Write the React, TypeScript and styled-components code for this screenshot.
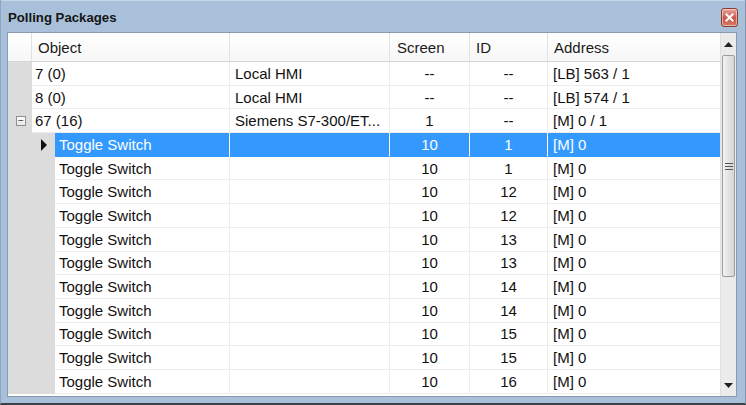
import React from "react";
import styled, { createGlobalStyle } from "styled-components";

const GlobalStyle = createGlobalStyle`
  html, body {
    margin: 0;
    padding: 0;
    background: #a9c0da;
  }
  * {
    box-sizing: border-box;
  }
`;

type RowData = {
  object: string;
  target: string;
  screen: string;
  id: string;
  address: string;
  child?: boolean;
  expand?: boolean;
  selected?: boolean;
};

const rows: RowData[] = [
  { object: "7 (0)", target: "Local HMI", screen: "--", id: "--", address: "[LB] 563 / 1" },
  { object: "8 (0)", target: "Local HMI", screen: "--", id: "--", address: "[LB] 574 / 1" },
  { object: "67 (16)", target: "Siemens S7-300/ET...", screen: "1", id: "--", address: "[M] 0 / 1", expand: true },
  { object: "Toggle Switch", target: "", screen: "10", id: "1", address: "[M] 0", child: true, selected: true },
  { object: "Toggle Switch", target: "", screen: "10", id: "1", address: "[M] 0", child: true },
  { object: "Toggle Switch", target: "", screen: "10", id: "12", address: "[M] 0", child: true },
  { object: "Toggle Switch", target: "", screen: "10", id: "12", address: "[M] 0", child: true },
  { object: "Toggle Switch", target: "", screen: "10", id: "13", address: "[M] 0", child: true },
  { object: "Toggle Switch", target: "", screen: "10", id: "13", address: "[M] 0", child: true },
  { object: "Toggle Switch", target: "", screen: "10", id: "14", address: "[M] 0", child: true },
  { object: "Toggle Switch", target: "", screen: "10", id: "14", address: "[M] 0", child: true },
  { object: "Toggle Switch", target: "", screen: "10", id: "15", address: "[M] 0", child: true },
  { object: "Toggle Switch", target: "", screen: "10", id: "15", address: "[M] 0", child: true },
  { object: "Toggle Switch", target: "", screen: "10", id: "16", address: "[M] 0", child: true },
];

function App() {
  return (
    <>
      <GlobalStyle />
      <StWindow>
        <StTitleBar>
          <StTitle>Polling Packages</StTitle>
          <StCloseButton>
            <svg width="9" height="9" viewBox="0 0 9 9">
              <path d="M1.5 1.5 L7.5 7.5 M7.5 1.5 L1.5 7.5" stroke="#fff" strokeWidth="2" strokeLinecap="square" />
            </svg>
          </StCloseButton>
        </StTitleBar>
        <StGridFrame>
          <StGrid>
            <StHeaderRow>
              <StHeaderCell />
              <StHeaderCell $pad={6}>Object</StHeaderCell>
              <StHeaderCell />
              <StHeaderCell $pad={7}>Screen</StHeaderCell>
              <StHeaderCell $pad={6}>ID</StHeaderCell>
              <StHeaderCell $pad={6} $last>Address</StHeaderCell>
            </StHeaderRow>
            {rows.map((row, i) => (
              <StRow key={i}>
                <StRowHeader>
                  {row.expand && <StExpandBox>−</StExpandBox>}
                </StRowHeader>
                <StObjectCell $selected={row.selected}>
                  {row.child && (
                    <StIndent>
                      {row.selected && <StArrow />}
                    </StIndent>
                  )}
                  <StCellText $selected={row.selected} $pad={row.child ? 4 : 3}>
                    {row.object}
                  </StCellText>
                </StObjectCell>
                <StCell $selected={row.selected} $pad={5}>{row.target}</StCell>
                <StCell $selected={row.selected} $align="center">{row.screen}</StCell>
                <StCell $selected={row.selected} $align="center">{row.id}</StCell>
                <StCell $selected={row.selected} $pad={5} $last>{row.address}</StCell>
              </StRow>
            ))}
          </StGrid>
          <StScrollBar>
            <StScrollArrow>
              <svg width="9" height="5" viewBox="0 0 9 5">
                <path d="M0 5 L4.5 0 L9 5 Z" fill="#222" />
              </svg>
            </StScrollArrow>
            <StThumb>
              <StGrip />
            </StThumb>
            <StTrack />
            <StScrollArrow>
              <svg width="9" height="5" viewBox="0 0 9 5">
                <path d="M0 0 L4.5 5 L9 0 Z" fill="#222" />
              </svg>
            </StScrollArrow>
          </StScrollBar>
        </StGridFrame>
      </StWindow>
    </>
  );
}

export default App;

const columns = "24px 198px 160px 80px 78px 172px";

const StWindow = styled.div`
  width: 746px;
  height: 405px;
  display: flex;
  flex-direction: column;
  background: #a9c0da;
  border-left: 1px solid #8ea7c4;
  border-right: 1px solid #7f93aa;
  border-bottom: 2px solid #3c4148;
  font-family: "Liberation Sans", Arial, sans-serif;
  color: #111;
`;

const StTitleBar = styled.div`
  height: 32px;
  display: flex;
  align-items: center;
  justify-content: space-between;
  padding: 0 7px 0 7px;
  border-top: 1px solid #c4d5e8;
`;

const StTitle = styled.span`
  font-size: 13.2px;
  font-weight: 700;
  color: #151515;
  margin-top: 1px;
`;

const StCloseButton = styled.div`
  width: 17px;
  height: 19px;
  margin-top: 2px;
  border: 1px solid #8c3b30;
  border-radius: 3px;
  background: linear-gradient(#e9a597, #c8574a 55%, #d77a6a);
  box-shadow: inset 0 0 0 1px rgba(255, 255, 255, 0.45);
  display: flex;
  align-items: center;
  justify-content: center;
`;

const StGridFrame = styled.div`
  flex: 1;
  display: flex;
  margin: 0 8px 6px 6px;
  background: #fff;
  border: 1px solid #8a9bb0;
  overflow: hidden;
`;

const StGrid = styled.div`
  width: 712px;
  display: flex;
  flex-direction: column;
  font-size: 15px;
`;

const StHeaderRow = styled.div`
  display: grid;
  grid-template-columns: ${columns};
  height: 29px;
  background: linear-gradient(#ffffff, #f7f7f7);
  border-bottom: 1px solid #d5d5d5;
`;

const StHeaderCell = styled.div<{ $pad?: number; $last?: boolean }>`
  display: flex;
  align-items: center;
  padding-left: ${(p) => p.$pad ?? 0}px;
  border-right: ${(p) => (p.$last ? "none" : "1px solid #e2e2e2")};
  color: #1a1a1a;
`;

const StRow = styled.div`
  display: grid;
  grid-template-columns: ${columns};
  height: 23.7px;
`;

const StRowHeader = styled.div`
  background: #dcdcdc;
  display: flex;
  align-items: center;
  justify-content: center;
`;

const StExpandBox = styled.div`
  width: 10px;
  height: 10px;
  margin-left: 2px;
  border: 1px solid #8e8f8f;
  background: linear-gradient(#ffffff, #e6e6e6);
  font-size: 10px;
  line-height: 7px;
  text-align: center;
  color: #333;
`;

const StObjectCell = styled.div<{ $selected?: boolean }>`
  display: flex;
  align-items: stretch;
  border-right: 1px solid ${(p) => (p.$selected ? "#ffffff" : "#ececec")};
  min-width: 0;
`;

const StIndent = styled.div`
  width: 23px;
  flex-shrink: 0;
  background: #dcdcdc;
  display: flex;
  align-items: center;
  padding-left: 9px;
`;

const StArrow = styled.div`
  width: 0;
  height: 0;
  border-top: 6px solid transparent;
  border-bottom: 6px solid transparent;
  border-left: 6px solid #111;
`;

const StCellText = styled.div<{ $selected?: boolean; $pad: number }>`
  flex: 1;
  display: flex;
  align-items: center;
  padding-left: ${(p) => p.$pad}px;
  background: ${(p) => (p.$selected ? "#3399ff" : "transparent")};
  color: ${(p) => (p.$selected ? "#fff" : "#111")};
  border-bottom: 1px solid ${(p) => (p.$selected ? "#3399ff" : "#ececec")};
  white-space: nowrap;
  overflow: hidden;
`;

const StCell = styled.div<{ $selected?: boolean; $align?: "center"; $pad?: number; $last?: boolean }>`
  display: flex;
  align-items: center;
  justify-content: ${(p) => (p.$align === "center" ? "center" : "flex-start")};
  padding-left: ${(p) => p.$pad ?? 0}px;
  background: ${(p) => (p.$selected ? "#3399ff" : "#fff")};
  color: ${(p) => (p.$selected ? "#fff" : "#111")};
  border-right: ${(p) => (p.$last ? "none" : `1px solid ${p.$selected ? "#ffffff" : "#ececec"}`)};
  border-bottom: 1px solid ${(p) => (p.$selected ? "#3399ff" : "#ececec")};
  white-space: nowrap;
  overflow: hidden;
`;

const StScrollBar = styled.div`
  width: 18px;
  display: flex;
  flex-direction: column;
  background: #ebebeb;
  border-left: 1px solid #e0e0e0;
`;

const StScrollArrow = styled.div`
  height: 22px;
  display: flex;
  align-items: center;
  justify-content: center;
`;

const StThumb = styled.div`
  height: 222px;
  margin: 0 1px;
  border: 1px solid #9c9c9c;
  border-radius: 2px;
  background: linear-gradient(90deg, #f3f3f3, #e2e2e2 50%, #d6d6d6);
  display: flex;
  align-items: center;
  justify-content: center;
`;

const StGrip = styled.div`
  width: 8px;
  height: 7px;
  background: repeating-linear-gradient(#555 0 1px, transparent 1px 3px);
`;

const StTrack = styled.div`
  flex: 1;
`;
